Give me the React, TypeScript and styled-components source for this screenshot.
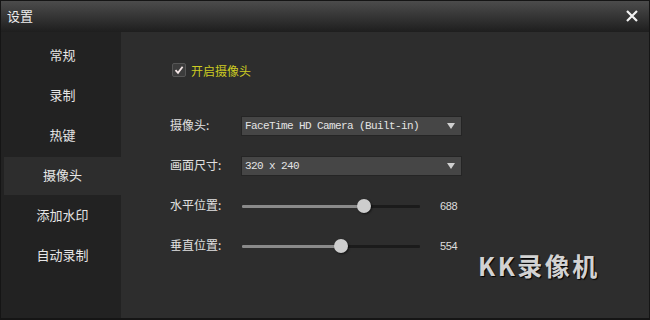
import styled, { createGlobalStyle } from "styled-components";

const Global = createGlobalStyle`
  html, body { margin: 0; padding: 0; background: #2d2d2d; }
  body { font-family: "Noto Sans CJK SC", "Noto Sans", sans-serif; }
`;

const Window = styled.div`
  position: relative;
  width: 650px;
  height: 320px;
  box-sizing: border-box;
  border: 1px solid #151515;
  border-bottom-width: 2px;
  background: #2d2d2d;
  display: flex;
  flex-direction: column;
  overflow: hidden;
`;

const TitleBar = styled.div`
  height: 31px;
  flex: none;
  display: flex;
  align-items: center;
  justify-content: space-between;
  padding: 0 11px 2px 6px;
  box-sizing: border-box;
  background: linear-gradient(#4c4c4c, #1e1e1e);
  color: #eeeeee;
  font-size: 13px;
`;

const CloseButton = styled.button`
  border: 0;
  background: none;
  padding: 0;
  width: 12px;
  height: 12px;
  display: flex;
  cursor: pointer;
`;

const Body = styled.div`
  flex: 1;
  display: flex;
`;

const Sidebar = styled.div`
  width: 120px;
  flex: none;
  background: #222222;
  padding-top: 5px;
  display: flex;
  flex-direction: column;
  gap: 2px;
`;

const NavItem = styled.div<{ $active?: boolean }>`
  height: 38px;
  margin-left: 3px;
  box-sizing: border-box;
  padding-bottom: 3px;
  display: flex;
  align-items: center;
  justify-content: center;
  color: #e6e6e6;
  font-size: 13px;
  background: ${(p) => (p.$active ? "#2d2d2d" : "transparent")};
`;

const Content = styled.div`
  flex: 1;
  padding: 28px 0 0 49px;
  display: flex;
  flex-direction: column;
  gap: 20px;
`;

const Row = styled.div<{ $gapAfter?: number }>`
  height: 20px;
  display: flex;
  align-items: center;
  margin-bottom: ${(p) => p.$gapAfter ?? 0}px;
`;

const CheckLabel = styled.label`
  display: flex;
  align-items: center;
  gap: 5px;
  margin-left: 2px;
  color: #cccc22;
  font-size: 12px;
`;

const CheckBox = styled.span`
  width: 12px;
  height: 12px;
  border: 1px solid #565656;
  border-radius: 2px;
  background: #3c3c3c;
  display: flex;
  align-items: center;
  justify-content: center;
`;

const Label = styled.div`
  width: 72px;
  padding-bottom: 3px;
  color: #e0e0e0;
  font-size: 12px;
`;

const Select = styled.div`
  width: 210px;
  height: 18px;
  border: 1px solid #252525;
  background: #464646;
  display: flex;
  align-items: center;
  justify-content: space-between;
  padding: 0 6px 0 3px;
  margin-left: -1px;
  color: #e4e4e4;
  font-family: "Liberation Mono", "DejaVu Sans Mono", monospace;
  font-size: 11px;
  letter-spacing: -0.6px;
`;

const Arrow = styled.span`
  width: 0;
  height: 0;
  border-left: 4px solid transparent;
  border-right: 4px solid transparent;
  border-top: 6px solid #cfcfcf;
`;

const Track = styled.div`
  position: relative;
  width: 178px;
  height: 3px;
  background: #1b1b1b;
  border-radius: 1px;
`;

const Fill = styled.div`
  height: 100%;
  background: #8a8a8a;
  border-radius: 1px;
`;

const Thumb = styled.div`
  position: absolute;
  top: 50%;
  width: 14px;
  height: 14px;
  margin: -7px 0 0 -7px;
  border-radius: 50%;
  background: #cdcdcd;
  box-shadow: 1px 1px 2px rgba(0, 0, 0, 0.6);
`;

const Value = styled.div`
  margin-left: 20px;
  color: #dddddd;
  font-family: "Liberation Sans", sans-serif;
  font-size: 11px;
  letter-spacing: -0.4px;
`;

const Watermark = styled.div`
  position: absolute;
  left: 477px;
  top: 246px;
  color: #d2d2d2;
  font-size: 25px;
  font-weight: 700;
  letter-spacing: 2.5px;
  text-shadow: 1px 1px 1px #000;
`;

function Slider({ value }: { value: number }) {
  const pct = (value / 1000) * 100;
  return (
    <Track>
      <Fill style={{ width: `${pct}%` }} />
      <Thumb style={{ left: `${pct}%` }} />
    </Track>
  );
}

const navItems = ["常规", "录制", "热键", "摄像头", "添加水印", "自动录制"];

export default function App() {
  return (
    <>
      <Global />
      <Window>
        <TitleBar>
          <span>设置</span>
          <CloseButton aria-label="关闭">
            <svg width="12" height="12" viewBox="0 0 12 12">
              <path d="M1 1L11 11M11 1L1 11" stroke="#f2f2f2" strokeWidth="2.2" />
            </svg>
          </CloseButton>
        </TitleBar>
        <Body>
          <Sidebar>
            {navItems.map((n) => (
              <NavItem key={n} $active={n === "摄像头"}>
                {n}
              </NavItem>
            ))}
          </Sidebar>
          <Content>
            <Row $gapAfter={16}>
              <CheckLabel>
                <CheckBox>
                  <svg width="10" height="10" viewBox="0 0 10 10">
                    <path d="M1.5 5.2L4 7.8L8.6 1.8" stroke="#f4e6e6" strokeWidth="1.8" fill="none" />
                  </svg>
                </CheckBox>
                开启摄像头
              </CheckLabel>
            </Row>
            <Row>
              <Label>摄像头:</Label>
              <Select>
                <span>FaceTime HD Camera (Built-in)</span>
                <Arrow />
              </Select>
            </Row>
            <Row>
              <Label>画面尺寸:</Label>
              <Select>
                <span>320 x 240</span>
                <Arrow />
              </Select>
            </Row>
            <Row>
              <Label>水平位置:</Label>
              <Slider value={684} />
              <Value>688</Value>
            </Row>
            <Row>
              <Label>垂直位置:</Label>
              <Slider value={556} />
              <Value>554</Value>
            </Row>
          </Content>
        </Body>
        <Watermark>KK录像机</Watermark>
      </Window>
    </>
  );
}
